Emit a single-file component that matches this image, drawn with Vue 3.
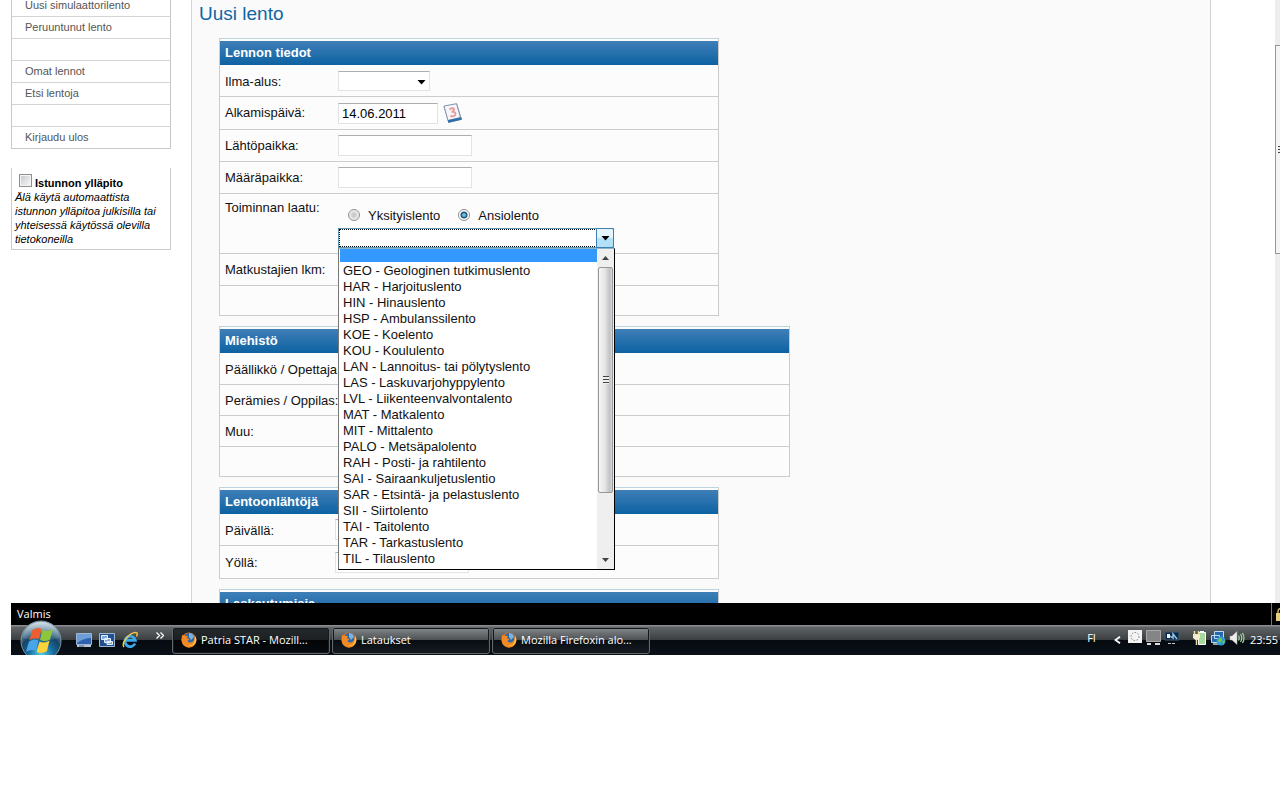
<script setup>
import { ref } from 'vue'

const menu = ['Uusi simulaattorilento', 'Peruuntunut lento', '', 'Omat lennot', 'Etsi lentoja', '', 'Kirjaudu ulos']
const options = [
  'GEO - Geologinen tutkimuslento',
  'HAR - Harjoituslento',
  'HIN - Hinauslento',
  'HSP - Ambulanssilento',
  'KOE - Koelento',
  'KOU - Koululento',
  'LAN - Lannoitus- tai pölytyslento',
  'LAS - Laskuvarjohyppylento',
  'LVL - Liikenteenvalvontalento',
  'MAT - Matkalento',
  'MIT - Mittalento',
  'PALO - Metsäpalolento',
  'RAH - Posti- ja rahtilento',
  'SAI - Sairaankuljetuslentio',
  'SAR - Etsintä- ja pelastuslento',
  'SII - Siirtolento',
  'TAI - Taitolento',
  'TAR - Tarkastuslento',
  'TIL - Tilauslento',
]
const tasks = ['Patria STAR - Mozill...', 'Lataukset', 'Mozilla Firefoxin alo...']
const date = ref('14.06.2011')
const kind = ref('ansio')
</script>

<template>
  <div class="screen">
    <div class="viewport">
      <aside class="sidebar">
        <nav class="menu">
          <div v-for="(item, i) in menu" :key="i" class="menu-row">
            <a v-if="item" href="#">{{ item }}</a>
          </div>
        </nav>
        <div class="session">
          <div class="session-head">
            <input id="keep" type="checkbox" class="check" />
            <label for="keep">Istunnon ylläpito</label>
          </div>
          <p>Älä käytä automaattista istunnon ylläpitoa julkisilla tai yhteisessä käytössä olevilla tietokoneilla</p>
        </div>
      </aside>

      <main class="content">
        <h1>Uusi lento</h1>

        <section class="panel">
          <h2>Lennon tiedot</h2>
          <div class="row">
            <label for="plane">Ilma-alus:</label>
            <div class="select-wrap small">
              <select id="plane"><option></option></select>
              <svg class="arrow" viewBox="0 0 9 5" width="9" height="5"><path d="M.5 0h8L4.500 4.500z" /></svg>
            </div>
          </div>
          <div class="row dated">
            <label for="start">Alkamispäivä:</label>
            <input id="start" v-model="date" type="text" class="date" />
            <button class="calendar" type="button" aria-label="Kalenteri">
              <svg width="20" height="20" viewBox="0 0 20 20">
                <path d="M.5 3.500 14 .5 19 16.500 5.500 20z" fill="#8f9fb5" />
                <path d="M1 3 13.500 .7 17.500 14.500 5 17.500z" fill="#f4f6fb" stroke="#8794a8" />
                <path d="M5 18.500 18.500 15.500" stroke="#2f6fae" stroke-width="2.800" />
                <path d="M6.500 6.500c2-2 5-1.500 4.500.5-.2 1-1.200 1.600-2.500 1.700 2-.1 4 .3 4 2 0 2.400-3.500 3.500-5 1.800" fill="none" stroke="#ee9a98" stroke-width="1.900" />
              </svg>
            </button>
          </div>
          <div class="row">
            <label for="from">Lähtöpaikka:</label>
            <input id="from" type="text" class="text" />
          </div>
          <div class="row">
            <label for="to">Määräpaikka:</label>
            <input id="to" type="text" class="text" />
          </div>
          <div class="row tall">
            <label for="purpose">Toiminnan laatu:</label>
            <div class="purpose">
              <div class="radios">
                <input id="private" v-model="kind" type="radio" name="kind" value="yksityis" />
                <label for="private">Yksityislento</label>
                <input id="paid" v-model="kind" type="radio" name="kind" value="ansio" />
                <label for="paid">Ansiolento</label>
              </div>
              <div class="select-wrap open">
                <select id="purpose"><option></option></select>
                <span class="drop"><svg viewBox="0 0 9 5" width="9" height="5"><path d="M.5 0h8L4.500 4.500z" /></svg></span>
                <div class="popup">
                  <ul role="listbox" aria-label="Toiminnan laatu">
                    <li class="selected" role="option" aria-selected="true"></li>
                    <li v-for="o in options" :key="o" role="option">{{ o }}</li>
                  </ul>
                  <div class="scroll">
                    <svg width="7" height="4" viewBox="0 0 7 4"><path d="M0 4h7L3.500 0z" fill="#444" /></svg>
                    <div class="thumb"><i></i></div>
                    <svg width="7" height="4" viewBox="0 0 7 4"><path d="M0 0h7L3.500 4z" fill="#444" /></svg>
                  </div>
                </div>
              </div>
            </div>
          </div>
          <div class="row">
            <label for="pax">Matkustajien lkm:</label>
            <input id="pax" type="text" class="text" />
          </div>
          <div class="row last"></div>
        </section>

        <section class="panel wide">
          <h2>Miehistö</h2>
          <div class="row"><label for="captain">Päällikkö / Opettaja:</label><input id="captain" type="text" class="text" /></div>
          <div class="row"><label for="mate">Perämies / Oppilas:</label><input id="mate" type="text" class="text" /></div>
          <div class="row"><label for="other">Muu:</label><input id="other" type="text" class="text" /></div>
          <div class="row last"></div>
        </section>

        <section class="panel counts">
          <h2>Lentoonlähtöjä</h2>
          <div class="row"><label for="day">Päivällä:</label><input id="day" type="text" class="text" /></div>
          <div class="row"><label for="night">Yöllä:</label><input id="night" type="text" class="text" /></div>
        </section>

        <section class="panel">
          <h2>Laskeutumisia</h2>
        </section>
      </main>

      <div class="page-scroll"><div class="page-thumb"><i></i></div></div>
    </div>

    <footer class="status">
      <span>Valmis</span>
      <span class="lock"><svg width="9" height="13" viewBox="0 0 9 13"><path d="M2 6V3.500a3 3 0 0 1 6 0V6" fill="none" stroke="#c9b060" stroke-width="1.500" /><path d="M0 5h9v8H0z" fill="#e5cc78" /></svg></span>
    </footer>

    <div class="taskbar">
      <button class="orb" type="button" aria-label="Käynnistä">
        <svg width="42" height="42" viewBox="0 0 42 42">
          <defs>
            <radialGradient id="ball" cx=".5" cy=".85" r=".8">
              <stop offset="0" stop-color="#4fd0ee" /><stop offset=".4" stop-color="#16699b" />
              <stop offset=".65" stop-color="#164365" /><stop offset="1" stop-color="#a2b8c4" />
            </radialGradient>
            <linearGradient id="gloss" x1="0" y1="0" x2="0" y2="1">
              <stop offset="0" stop-color="#dbe8ed" stop-opacity=".8" /><stop offset="1" stop-color="#7aa0b5" stop-opacity=".2" />
            </linearGradient>
          </defs>
          <circle cx="21" cy="21" r="20" fill="url(#ball)" stroke="#7994a3" />
          <path d="M3 18a18 16 0 0 1 36 0q-18 5-36 0z" fill="url(#gloss)" />
          <path d="M12.500 10q5-3.500 9-1l-2.500 10q-4.500-2-9.500 1z" fill="#ee5f30" />
          <path d="M22.500 10q5 2.500 10.500-1l-3 10.500q-5 3-10 .5z" fill="#8cc63c" />
          <path d="M9 21.500q5-3.500 9.500-1L16 31q-5-2.500-10 1z" fill="#4aa5e8" />
          <path d="M19.500 21.500q5 2.500 10-1L27 31q-5 3.500-10.500 1z" fill="#fdd23a" />
        </svg>
      </button>
      <div class="quick">
        <svg width="16" height="16" viewBox="0 0 16 16"><path d="M.5 1.500h15v11H.5z" fill="#2f62ae" stroke="#9db6d6" /><path d="M1 2h14v4q-7 0-14 5z" fill="#6d9ed8" /><path d="M1 13h14v2H1z" fill="#b9c6d5" /><path d="M3 14h5" stroke="#40618b" /></svg>
        <svg width="16" height="16" viewBox="0 0 16 16"><path d="M.5 1.500h15v13H.5z" fill="#244f8e" stroke="#9db6d6" /><path d="M2.500 3.500h6v4h-6zM5.500 6.500h6v4h-6zM8 9.500h5.500v3H8z" fill="#7ca7da" stroke="#e8f1fb" /></svg>
        <svg width="16" height="18" viewBox="0 0 16 18"><path d="M13 12.500A5.200 5.200 0 1 1 13.300 9.300H4.500" fill="none" stroke="#39a9ec" stroke-width="2.800" /><path d="M2 16C-1 12 7 1.500 14 1.500c1.500 0 1.500 2 .5 4" fill="none" stroke="#f2c643" stroke-width="1.500" /></svg>
      </div>
      <svg class="more" width="8" height="7" viewBox="0 0 8 7"><path d="M.5.5l3 3-3 3M4.500.5l3 3-3 3" fill="none" stroke="#fff" stroke-width="1.300" /></svg>
      <button v-for="(t, i) in tasks" :key="t" type="button" class="task" :class="{ active: i === 0 }">
        <svg width="16" height="16" viewBox="0 0 16 16">
          <circle cx="8" cy="8" r="7.500" fill="#e9731c" />
          <circle cx="8.500" cy="6" r="5.300" fill="#3264aa" />
          <path d="M8 1q4 0 5 4l-3 3-2-3z" fill="#78b5dd" />
          <path d="M1 3l3 1q2-.5 3 .5L5.500 6l3 1-2 2q2 3 6 0 1.500-2 1-5 3 4 .5 8t-7 3.500Q1 14 .5 8z" fill="#f18a22" />
          <path d="M14 4q3 5-1 8.500-3 2-6 1 5 0 6.500-3.500z" fill="#ffd34d" />
        </svg>
        <span>{{ t }}</span>
      </button>
      <div class="tray">
        <span class="lang">FI</span>
        <svg class="back" width="7" height="8" viewBox="0 0 7 8"><path d="M6 .8 1.500 4 6 7.200" fill="none" stroke="#fff" stroke-width="1.800" /></svg>
        <svg width="15" height="16" viewBox="0 0 15 16"><path d="M0 0h14v13H0z" fill="#f4f4f4" /><circle cx="7" cy="6.500" r="4" fill="none" stroke="#777" stroke-dasharray="1.500 1.500" /></svg>
        <svg width="15" height="16" viewBox="0 0 15 16"><path d="M.5 .5h14v11H.5z" fill="#858585" stroke="#a8a8a8" /><path d="M1 14h4M9 14h5" stroke="#ddd" stroke-width="2" /></svg>
        <svg class="net" width="16" height="16" viewBox="0 0 16 16"><path d="M1 2h14v8H1z" fill="#12253f" stroke="#3f5f7b" /><path d="M3 4h3v4H3z" fill="#e8f4ff" /><path d="m6 6 3 2V4l4 5" fill="none" stroke="#8cc6ee" stroke-width="1.500" /><path d="M4 13.500h8" stroke="#ccc" stroke-dasharray="3 1" /></svg>
        <svg width="15" height="16" viewBox="0 0 15 16"><path d="M6.500 2.500h7v12h-7z" fill="#a5da9c" stroke="#fff" /><path d="M8 1h4v2H8z" fill="#fff" /><path d="M1 4h7v4L5.500 10h-2L1 8z" fill="#f2eecb" /><path d="M2.500 1v4M6.500 1v4M4.500 9v6" stroke="#e9e0ac" stroke-width="1.500" /></svg>
        <svg width="16" height="16" viewBox="0 0 16 16"><path d="M4.500 1.500h9v7h-9zM1.500 5.500h8v7h-8z" fill="#2768ad" stroke="#b8dcf5" /><path d="M3 14h6" stroke="#ccc" stroke-width="1.500" /><circle cx="11" cy="11" r="4.500" fill="#2d9bd8" /><path d="M9 8q3-1 3 2l-2 3-2-2zM12 12l3-2-1 4z" fill="#7ac34a" /></svg>
        <svg width="16" height="16" viewBox="0 0 16 16"><path d="M1 6h2l5-4.500v13L3 10H1z" fill="#eee" stroke="#aaa" stroke-width=".5" /><path d="M9.500 5.500q1.500 2.500 0 5M11.500 4q2.500 4 0 8M13.500 3q3 5 0 10" fill="none" stroke="#9ddc9a" stroke-width="1.200" /></svg>
        <time>23:55</time>
      </div>
    </div>
  </div>
</template>

<style>
body {
  background: #fff;
}
</style>

<style scoped>
* {
  box-sizing: border-box;
}
.screen {
  display: flex;
  flex-direction: column;
  height: 655px;
  margin-left: 11px;
  overflow: hidden;
  font: 13px/16px "Liberation Sans", Arial, sans-serif;
  color: #111;
}
.viewport {
  display: flex;
  flex: 1;
  min-height: 0;
  overflow: hidden;
}
.sidebar {
  flex: none;
  width: 160px;
  margin-top: -5px;
  margin-right: 20px;
  font-size: 11px;
}
.menu {
  border: 1px solid #c8c8c8;
  border-top: 0;
}
.menu-row {
  height: 22px;
  padding-left: 13px;
  border-bottom: 1px solid #d4d4d4;
  line-height: 20px;
}
.menu-row:last-child {
  height: 21px;
  border-bottom: 0;
}
.menu a {
  color: #555;
  text-decoration: none;
}
.session {
  margin-top: 19px;
  padding: 5px 3px 3px;
  border: 1px solid #ccc;
  border-top: 0;
  line-height: 14px;
  color: #000;
}
.session-head {
  display: flex;
  align-items: flex-end;
  gap: 3px;
  height: 17px;
  padding-left: 4px;
  font-weight: bold;
}
.check {
  appearance: none;
  width: 13px;
  height: 13px;
  margin: 0 0 3px;
  border: 1px solid #8e8f8f;
  background: linear-gradient(135deg, #c4c7cc, #fafafa);
  box-shadow: inset 0 0 0 1px #f4f4f4;
}
.session p {
  margin: 0;
  font-style: italic;
}
.content {
  flex: 1;
  min-width: 0;
  align-self: stretch;
  padding: 0 27px;
  border: solid #d4d4d4;
  border-width: 0 1px;
  background: #fafafa;
}
h1 {
  margin: 2px 0 12px -20px;
  font-size: 19px;
  line-height: 24px;
  font-weight: normal;
  color: #0f66a3;
}
.panel {
  width: 500px;
  max-width: 100%;
  margin-bottom: 10px;
  padding-top: 2px;
  border: 1px solid #ccc;
  border-top-color: #bed3e0;
  background: #fcfcfc;
}
.panel.wide {
  width: 571px;
}
h2 {
  margin: 0;
  padding: 0 5px;
  background: linear-gradient(#3f7fb8, #0d62a2);
  color: #fff;
  font-size: 13px;
  line-height: 24px;
}
.row {
  display: flex;
  align-items: center;
  height: 32px;
  padding-left: 5px;
  border-bottom: 1px solid #ccc;
}
.row:last-child {
  border-bottom: 0;
}
.row.dated {
  height: 33px;
}
.wide .row:not(:first-of-type) {
  height: 31px;
}
.panel .row.last {
  height: 29px;
}
.row > label {
  flex: none;
  width: 113px;
  white-space: nowrap;
}
.wide .row > label,
.counts .row > label,
.row:first-of-type > label {
  padding-top: 2px;
}
.counts .row > label {
  width: 110px;
}
.row.tall {
  align-items: flex-start;
  height: 60px;
  padding-top: 6px;
}
input[type="text"],
select {
  appearance: none;
  display: block;
  height: 21px;
  margin: 0;
  padding: 0 4px;
  border: 1px solid #e2e3e6;
  border-top-color: #abadb3;
  border-radius: 0;
  background: #fff;
  font: 13px/16px "Liberation Sans", Arial, sans-serif;
  color: #000;
}
.text {
  width: 134px;
}
input.date {
  width: 100px;
  padding: 0 3px;
}
.calendar {
  height: 20px;
  margin: 0 0 0 5px;
  padding: 0;
  border: 0;
  background: none;
}
.select-wrap {
  position: relative;
}
.select-wrap select {
  width: 100%;
  height: 20px;
}
.small {
  width: 92px;
}
.panel .row:first-of-type {
  height: 32px;
}
.arrow {
  position: absolute;
  right: 4px;
  top: 9px;
}
.radios {
  display: flex;
  align-items: center;
  height: 28px;
  padding-top: 4px;
}
.radios input {
  appearance: none;
  width: 12px;
  height: 12px;
  margin: 0 8px 2px 10px;
  border: 1px solid #8e8f8f;
  border-radius: 50%;
  background: radial-gradient(#c9cbce 20%, #f5f5f5 75%);
}
.radios input + label + input {
  margin-left: 18px;
}
.radios input:checked {
  background: radial-gradient(circle, #6ec4df 0 1px, #174a70 3px, #fff 4px);
}
.open {
  width: 276px;
}
.open select {
  border: 1px solid #5f96b4;
  outline: 1px dotted #000;
  outline-offset: -2px;
}
.drop {
  position: absolute;
  top: 0;
  right: 0;
  display: flex;
  align-items: center;
  justify-content: center;
  width: 18px;
  height: 20px;
  border: 1px solid #3c7fb1;
  border-radius: 0 2px 2px 0;
  background: linear-gradient(#e5f5fd 45%, #b2e0f8 55%);
  pointer-events: none;
}
.popup {
  position: absolute;
  z-index: 2;
  top: 20px;
  left: 0;
  right: -1px;
  display: flex;
  border: 1px solid #000;
  border-top-color: #8eb4c8;
  border-left-color: #777;
  background: #fff;
}
.popup ul {
  flex: 1;
  margin: 0;
  padding: 0 0 3px 1px;
  list-style: none;
}
.popup li {
  height: 16px;
  padding-left: 3px;
  line-height: 18px;
  white-space: nowrap;
}
.popup .selected {
  height: 13px;
  background: #3399ff;
}
.scroll {
  display: flex;
  flex-direction: column;
  align-items: center;
  width: 17px;
  padding: 7px 0;
  background: #efefef;
}
.thumb {
  display: flex;
  align-items: center;
  justify-content: center;
  width: 15px;
  height: 226px;
  margin: 7px 0 auto;
  border: 1px solid #979797;
  border-radius: 2px;
  background: linear-gradient(90deg, #f5f5f5, #e6e6e8 45%, #bfc0c4 85%, #ddd);
}
.thumb i,
.page-thumb i {
  width: 6px;
  height: 8px;
  background: repeating-linear-gradient(#444 0 1px, #eee 1px 3px);
}
.page-scroll {
  flex: none;
  width: 5px;
  margin-left: 64px;
  padding-top: 45px;
  background: #ededed;
}
.page-thumb {
  display: flex;
  align-items: center;
  justify-content: flex-end;
  height: 209px;
  border: 1px solid #979797;
  border-right: 0;
  background: #f4f4f4;
}
.page-thumb i {
  width: 2px;
}
.status {
  display: flex;
  flex: none;
  justify-content: space-between;
  height: 22px;
  padding-left: 6px;
  background: #000;
  color: #fff;
  font: 11px/22px "Open Sans", "Noto Sans", sans-serif;
}
.lock {
  display: flex;
  align-items: center;
  width: 9px;
  padding-left: 4px;
  overflow: hidden;
  border-left: 1px solid #777;
}
.lock svg {
  flex: none;
}
.taskbar {
  display: flex;
  flex: none;
  align-items: center;
  height: 30px;
  background: linear-gradient(#8a8c8e 0 1px, #626568 2px, #3b3e41 50%, #050a10 51%, #0a1118);
  color: #fff;
  font: 11px/16px "Open Sans", "Noto Sans", sans-serif;
}
.orb {
  flex: none;
  align-self: flex-start;
  width: 42px;
  height: 42px;
  margin: -5px 14px 0 9px;
  padding: 0;
  border: 0;
  background: none;
}
.quick {
  display: flex;
  align-items: center;
  gap: 7px;
  width: 80px;
}
.quick svg {
  flex: none;
}
.more {
  margin-right: 8px;
  margin-bottom: 10px;
}
.task {
  display: flex;
  align-items: center;
  gap: 4px;
  width: 158px;
  height: 27px;
  margin: 0 2px 0 0;
  padding: 0 8px;
  border: 1px solid #62676b;
  border-radius: 3px;
  background: linear-gradient(#85888b, #4c5053 48%, #080d12 50%, #151b21);
  box-shadow: inset 0 0 0 1px #15191d;
  color: #fff;
  font: 11px/16px "Open Sans", "Noto Sans", sans-serif;
  white-space: nowrap;
}
.task.active {
  background: linear-gradient(#25292c, #1c2023 48%, #020406 50%, #080c10);
}
.tray {
  display: flex;
  align-items: center;
  gap: 3px;
  margin-left: auto;
  padding: 0 2px 4px 0;
}
.lang {
  margin-right: 15px;
}
.back {
  margin: 4px 4px 0 0;
}
.net {
  margin-right: 9px;
}
time {
  margin: 4px 0 0 2px;
}
</style>
